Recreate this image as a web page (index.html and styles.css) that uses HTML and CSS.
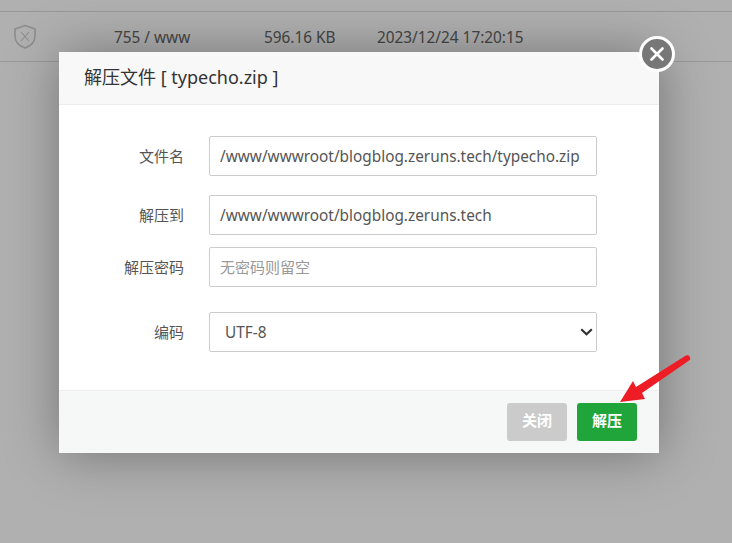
FILE: index.html
```html
<!DOCTYPE html>
<html lang="zh-CN">
<head>
<meta charset="utf-8">
<title>解压文件</title>
<link rel="stylesheet" href="styles.css">
</head>
<body>
<div class="table">
  <div class="row">
    <svg class="shield" width="24" height="26" viewBox="0 0 24 26" fill="none" stroke="#ccc" stroke-width="1.600"><path d="M12 1.500 22 5V12c0 6-4 9.800-10 12C6 21.800 2 18 2 12V5Z"/><path d="M8 8l8 9M16 8l-8 9" stroke-width="1.100"/></svg>
    <span class="perm">755 / www</span>
    <span class="size">596.16 KB</span>
    <span class="date">2023/12/24 17:20:15</span>
  </div>
</div>
<div class="shade"></div>
<div class="modal">
  <div class="modal-title">解压文件 [ typecho.zip ]</div>
  <form class="modal-body">
    <label class="field f-name"><span class="label">文件名</span><input class="control" type="text" value="/www/wwwroot/blogblog.zeruns.tech/typecho.zip"></label>
    <label class="field f-to"><span class="label">解压到</span><input class="control" type="text" value="/www/wwwroot/blogblog.zeruns.tech"></label>
    <label class="field f-pass"><span class="label">解压密码</span><input class="control" type="text" placeholder="无密码则留空"></label>
    <label class="field f-code"><span class="label">编码</span><select class="control select"><option>UTF-8</option></select>
      <svg class="chevron" width="13" height="8" viewBox="0 0 13 8" fill="none" stroke="#333" stroke-width="2.200"><path d="M1.200 1.200 6.500 6.300 11.800 1.200"/></svg>
    </label>
  </form>
  <div class="modal-foot">
    <button class="btn btn-close" type="button">关闭</button>
    <button class="btn btn-go" type="button">解压</button>
  </div>
  <div class="close-x">
    <svg width="14" height="14" viewBox="0 0 14 14" stroke="#fff" stroke-width="2.600" stroke-linecap="round"><path d="M1.500 1.500l11 11M12.500 1.500l-11 11"/></svg>
  </div>
</div>
<svg class="arrow" width="92" height="60" viewBox="0 0 92 60"><path d="M20 48 33 27 36 33 85.900 1.500A3 3 0 0 1 89.100 6.500L42 39 45 45Z" fill="#ee1c25"/></svg>
</body>
</html>
```
FILE: styles.css
```css
* { box-sizing: border-box; }
html, body { margin: 0; height: 100%; }
body {
  width: 732px;
  height: 543px;
  overflow: hidden;
  background: #fff;
  font-family: "Noto Sans", "Noto Sans CJK SC", sans-serif;
  color: #555;
  position: relative;
}
.table { padding-top: 11px; }
.row {
  height: 51px;
  border-top: 1px solid #ddd;
  border-bottom: 1px solid #ddd;
  display: flex;
  align-items: center;
  font-size: 15.35px;
  line-height: 28px;
  color: #666;
}
.row span { padding-top: 1px; }
.shield { margin-left: 13px; flex: none; }
.perm { margin-left: 77px; width: 150px; }
.size { width: 113px; }
.shade { position: absolute; inset: 0; background: rgba(0,0,0,.31); }
.modal {
  position: absolute;
  left: 59px;
  top: 52px;
  width: 600px;
  height: 401px;
  background: #fff;
  box-shadow: 1px 1px 50px rgba(0,0,0,.35);
  display: flex;
  flex-direction: column;
}
.modal-title {
  height: 53px;
  flex: none;
  padding-left: 25px;
  line-height: 50px;
  font-size: 18px;
  color: #333;
  background: #f8f8f8;
  border-bottom: 1px solid #eee;
}
.modal-body { flex: 1; padding-top: 31px; }
.field { display: flex; align-items: center; height: 40px; position: relative; }
.f-to { margin-top: 19px; }
.f-pass { margin-top: 12px; }
.f-code { margin-top: 25px; }
.label {
  width: 125px;
  text-align: right;
  font-size: 15px;
  line-height: 40px;
  color: #555;
  flex: none;
}
.control {
  margin-left: 25px;
  width: 388px;
  height: 40px;
  padding: 0 10px;
  border: 1px solid #ccc;
  border-radius: 2px;
  background: #fff;
  font: 15.35px "Noto Sans", "Noto Sans CJK SC", sans-serif;
  color: #555;
  outline: none;
}
.control::placeholder { color: #999; opacity: 1; font-size: 15px; }
.select { padding-left: 15px; appearance: none; }
.chevron { position: absolute; left: 521px; top: 16px; pointer-events: none; }
.modal-foot {
  height: 63px;
  flex: none;
  background: #f6f8f8;
  border-top: 1px solid #eee;
  display: flex;
  justify-content: flex-end;
  align-items: center;
  gap: 10px;
  padding: 0 22px 1px 0;
}
.btn {
  width: 60px;
  height: 38px;
  border: 0;
  padding: 0 0 5px;
  border-radius: 3px;
  color: #fff;
  font: bold 15px "Noto Sans", "Noto Sans CJK SC", sans-serif;
}
.btn-close { background: #cbcbcb; }
.btn-go { background: #20a53a; }
.close-x {
  position: absolute;
  right: -16px;
  top: -16px;
  width: 36px;
  height: 36px;
  border-radius: 50%;
  background: #777;
  border: 3px solid #fff;
  display: flex;
  align-items: center;
  justify-content: center;
}
.arrow { position: absolute; left: 600px; top: 354px; }
```
